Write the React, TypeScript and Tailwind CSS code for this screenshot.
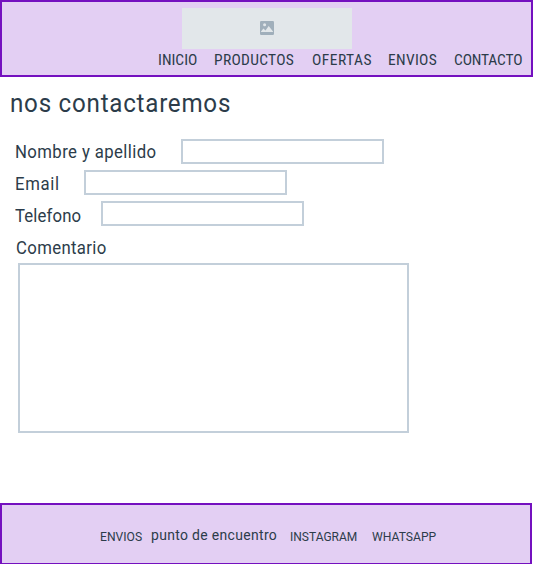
const nav = [
  { label: "INICIO", cls: "ml-[156px] w-[56px]" },
  { label: "PRODUCTOS", cls: "w-[98px] tracking-[0.3px]" },
  { label: "OFERTAS", cls: "w-[76px] tracking-[0.5px]" },
  { label: "ENVIOS", cls: "w-[66px] tracking-[0.3px]" },
  { label: "CONTACTO", cls: "tracking-[-0.15px]" },
];

const fields = [
  { label: "Nombre y apellido", cls: "w-[166px]", text: "mt-px tracking-[0.43px]" },
  { label: "Email", cls: "w-[69px]", text: "mt-[2px] tracking-[0.7px]" },
  { label: "Telefono", cls: "w-[86px]", text: "mt-[3px] tracking-[0.15px]" },
];

function ImageIcon() {
  return (
    <svg width="14" height="14" viewBox="0 0 14 14">
      <rect width="14" height="14" rx="1.2" fill="#a0afbb" />
      <circle cx="4.6" cy="3.8" r="1.5" fill="#e2e7ea" />
      <path d="M1 11 V10.4 L3.4 7.6 L5.5 9.4 L8.7 5 L13 10.6 V11 Z" fill="#e2e7ea" />
    </svg>
  );
}

export default function App() {
  return (
    <div className="flex h-[564px] w-[533px] flex-col overflow-hidden bg-white font-['Roboto',sans-serif] text-[#2c3c4a]">
      <header className="h-[77px] shrink-0 border-2 border-[#7410bf] bg-[#e3cff3] pt-[6px]">
        <div className="ml-[180px] flex h-[41px] w-[170px] items-start justify-center bg-[#e2e7ea] pt-[13px]">
          <ImageIcon />
        </div>
        <nav className="mt-px flex text-[15.5px] leading-[20px] whitespace-nowrap [font-stretch:75%]">
          {nav.map((n) => (
            <a key={n.label} className={`shrink-0 ${n.cls}`}>{n.label}</a>
          ))}
        </nav>
      </header>
      <main className="flex h-[426px] shrink-0 flex-col">
        <h1 className="mt-[10px] ml-[10px] origin-left scale-x-93 text-[26px] leading-[32px] tracking-[0.8px]">
          nos contactaremos
        </h1>
        <div className="mt-[20px] ml-[15px] flex flex-col gap-[6px] text-[18px] leading-[24px] whitespace-nowrap">
          {fields.map((f) => (
            <label key={f.label} className="flex h-[25px]">
              <span className={`shrink-0 ${f.cls}`}>
                <span className={`block origin-left scale-x-93 ${f.text}`}>{f.label}</span>
              </span>
              <input className="h-[25px] w-[203px] border-2 border-[#c3cfda] bg-white" />
            </label>
          ))}
        </div>
        <label className="mt-[10px] ml-[16px] origin-left scale-x-93 text-[18px] leading-[24px] tracking-[0.37px]">
          Comentario
        </label>
        <textarea className="mt-[3px] ml-[18px] h-[170px] w-[391px] shrink-0 resize-none border-2 border-[#c3cfda] bg-white" />
      </main>
      <footer className="flex h-[62px] w-[532px] shrink-0 border-2 border-[#7410bf] bg-[#e3cff3] pt-[20px] text-[12.5px] leading-[20px] whitespace-nowrap">
        <a className="mt-[2px] ml-[98px] w-[51px] origin-left scale-x-97">ENVIOS</a>
        <a className="w-[139px] origin-left scale-x-93 text-[15px] tracking-[0.36px]">punto de encuentro</a>
        <a className="mt-[2px] w-[82px] origin-left scale-x-96">INSTAGRAM</a>
        <a className="mt-[2px] w-[68px] origin-left scale-x-97">WHATSAPP</a>
      </footer>
    </div>
  );
}
